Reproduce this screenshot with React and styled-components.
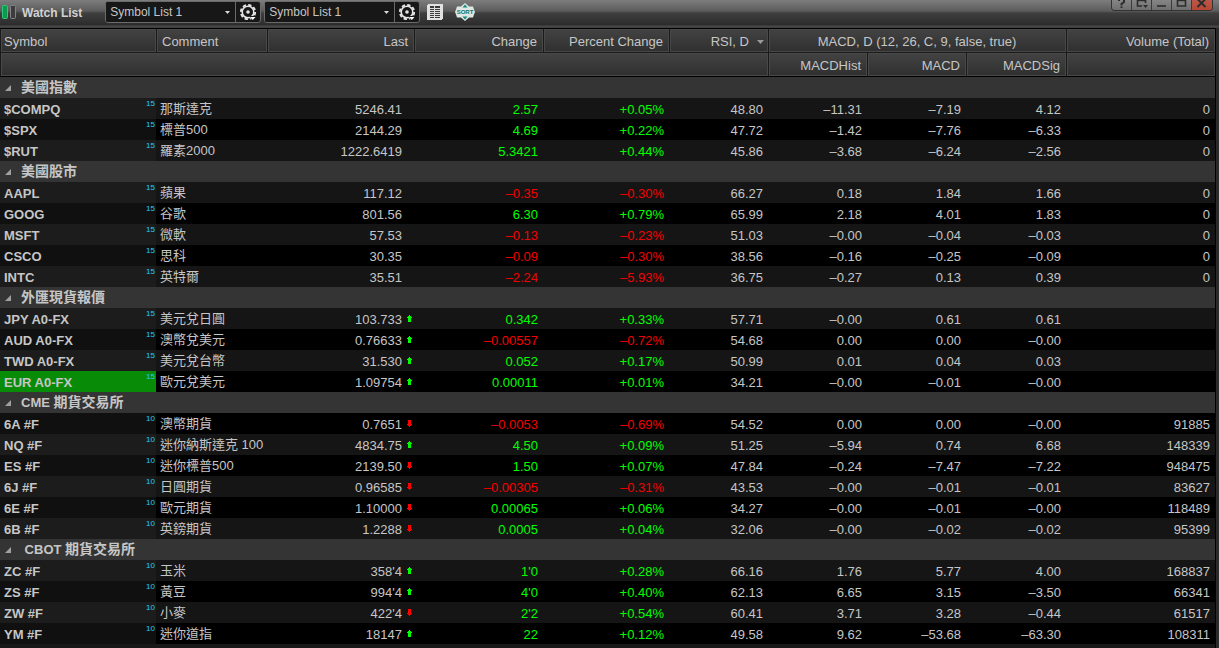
import React from 'react';
import styled, { createGlobalStyle, css } from 'styled-components';

const GlobalStyle = createGlobalStyle`
  * { box-sizing: border-box; }
  body {
    margin: 0;
    background: #2d2d2d;
    color: #c6c6c6;
    font: 13px/20px "Liberation Sans", "Noto Sans CJK TC", sans-serif;
  }
  button, select { font: inherit; color: inherit; }
`;

const Window = styled.div`
  min-height: 100vh;
  display: flex;
  flex-direction: column;
  background: #2b2b2b;
`;

const Toolbar = styled.header`
  height: 28px;
  display: flex;
  align-items: flex-start;
  padding: 0 6px 0 2px;
  background: linear-gradient(#7d7d7d, #5c5c5c 11px, #3f3f3f 13px, #2c2c2c 25px, #4a4a4a 26px, #3c3c3c);
`;

const Title = styled.h1`
  margin: 0 23px 0 6px;
  font-size: 12px;
  line-height: 26px;
  color: #d2d2d2;
`;

const LinkMark = styled.svg`
  margin-top: 5px;
  flex: none;
`;

const ListPicker = styled.div`
  display: flex;
  height: 22px;
  margin: 1px 3px 0 0;
  border: 1px solid #6a6a6a;
  border-radius: 3px;
  background: #171717;
  overflow: hidden;
`;

const SelectWrap = styled.label`
  position: relative;
  display: block;
`;

const Select = styled.select`
  appearance: none;
  display: block;
  width: ${(p) => p.$width}px;
  height: 20px;
  padding: 0 18px 0 4px;
  border: 0;
  border-right: 1px solid #6a6a6a;
  background: #171717;
  font-size: 12px;
  line-height: 20px;
`;

const SelectArrow = styled.svg`
  position: absolute;
  right: 6px;
  top: 9px;
  pointer-events: none;
`;

const IconButton = styled.button`
  display: flex;
  align-items: center;
  justify-content: center;
  width: 24px;
  height: 20px;
  padding: 0;
  border: 0;
  background: none;
`;

const Tools = styled.div`
  display: flex;
  gap: 6px;
  padding-top: 2px;
`;

const WindowControls = styled.div`
  display: flex;
  margin-left: auto;
  height: 11px;
  border: 1px solid #333;
  border-top: 0;
  border-radius: 0 0 4px 4px;
  overflow: hidden;
`;

const WindowButton = styled.button`
  display: flex;
  width: 20px;
  height: 11px;
  padding: 0 0 0 4px;
  border: 0;
  border-right: 1px solid #3a3a3a;
  background: ${(p) => (p.$danger ? 'linear-gradient(#b9584a, #b8452f)' : 'linear-gradient(#858585, #6d6d6d)')};
  &:last-child { border-right: 0; }
`;

const Panel = styled.main`
  flex: 1;
  margin-right: 3px;
  border-right: 1px solid #000;
  border-top: 1px solid #000;
  background: #181818;
`;

const Table = styled.table`
  width: 100%;
  table-layout: fixed;
  border-collapse: separate;
  border-spacing: 0;
`;

const Col = styled.col`
  width: ${(p) => (p.$width ? `${p.$width}px` : 'auto')};
`;

const HeadCell = styled.th`
  height: 24px;
  padding: 2px 6px 0 5px;
  border-left: 1px solid #1a1a1a;
  border-bottom: 1px solid ${(p) => (p.$last ? '#000' : '#1a1a1a')};
  background: linear-gradient(#434343, #2f2f2f);
  box-shadow: inset 0 0 0 1px #484848;
  font-weight: 400;
  line-height: 21px;
  text-align: ${(p) => p.$align || 'right'};
  white-space: nowrap;
  &:first-child { padding-left: 3px; }
`;

const SortButton = styled.button`
  display: inline-flex;
  align-items: center;
  gap: 8px;
  height: 21px;
  padding: 0;
  border: 0;
  background: none;
  vertical-align: top;
`;

const SortedHeadCell = styled(HeadCell)`
  padding-right: 4px;
`;

const GroupCell = styled.th`
  height: 21px;
  padding: 0;
  background: #343434;
  text-align: left;
`;

const GroupToggle = styled.button`
  display: flex;
  align-items: center;
  height: 21px;
  padding: 0 0 0 5px;
  border: 0;
  background: none;
  font-size: 14px;
  font-weight: 700;
  line-height: 21px;
  white-space: pre;
  svg { margin: 1px 10px 0 0; }
`;

const Market = styled.span`
  font-size: 13px;
`;

const toneColors = { up: '#00ff00', down: '#f40000' };

const Cell = styled.td`
  height: 21px;
  padding: 2px 5px 0 0;
  color: ${(p) => toneColors[p.$tone] || 'inherit'};
  line-height: 19px;
  text-align: right;
  white-space: nowrap;
`;

const CommentCell = styled(Cell)`
  padding: 0 0 0 4px;
  line-height: 21px;
  text-align: left;
`;

const SymbolCell = styled.th`
  height: 21px;
  padding: 0;
  background: ${(p) => (p.$selected ? '#088c08' : p.$light ? '#1c1c1c' : '#101010')};
  text-align: left;
`;

const SymbolLine = styled.div`
  display: flex;
  justify-content: space-between;
  height: 21px;
  padding: 0 1px 0 4px;
  line-height: 23px;
`;

const Delay = styled.span`
  font-size: 8px;
  font-weight: 400;
  line-height: 11px;
  color: #22ccff;
`;

const Row = styled.tr`
  ${(p) => css`background: ${p.$light ? '#151515' : '#000'};`}
`;

const LastPrice = styled.div`
  display: flex;
  justify-content: flex-end;
  align-items: center;
  height: 19px;
`;

const TickSlot = styled.span`
  display: flex;
  width: 7px;
  padding-left: 1px;
  margin: 0 -4px 3px 4px;
`;

const Gear = () => (
  <svg width="20" height="20" viewBox="0 0 20 20" aria-hidden="true">
    <circle cx="10" cy="10" r="7.2" fill="none" stroke="#e6e6e6" strokeWidth="1.8" strokeDasharray="3.4 2.25" />
    <circle cx="10" cy="10" r="5.8" fill="none" stroke="#e6e6e6" strokeWidth="1.6" />
    <circle cx="10" cy="10" r="1.8" fill="#e6e6e6" />
    <path d="M11 14h8l-4 5z" fill="#171717" />
    <path d="M12 15h5.5L14.8 18z" fill="#fff" />
  </svg>
);

const SheetIcon = () => (
  <svg width="16" height="16" viewBox="0 0 16 16" shapeRendering="crispEdges" aria-hidden="true">
    <rect width="16" height="16" rx="2" fill="#e2e2e2" />
    <rect x="3" y="2" width="10" height="12" fill="#3a3a3a" />
    {[4, 6, 8, 10, 12].map((y) => <rect key={y} x="3" y={y} width="10" height="1" fill="#dcdcdc" />)}
    <rect x="7" y="2" width="1" height="12" fill="#dcdcdc" />
  </svg>
);

const SortIcon = () => (
  <svg width="20" height="18" viewBox="0 0 20 18" aria-hidden="true">
    <path d="M10 0L14 3.5h4l1 3 1 2.5-1 2.5-1 3h-4L10 18 6 14.5H2l-1-3L0 9l1-2.5 1-3h4z" fill="#dfe6e4" />
    <path d="M7.5 4.5h5L10 1.5zM7.5 13.5h5L10 16.5z" fill="#128a78" />
    <text x="10" y="11" textAnchor="middle" fontFamily="Liberation Sans, sans-serif" fontSize="6" fontWeight="700" fill="#0c7565">SORT</text>
  </svg>
);

const Tick = ({ dir }) => (
  <svg width="5" height="7" viewBox="0 0 5 7" shapeRendering="crispEdges" role="img" aria-label={dir}>
    {dir === 'up'
      ? <path d="M2 0h1v1h1v1h1v1H4v4H1V3H0V2h1V1h1z" fill="#00ff00" />
      : <path d="M1 0h3v4h1v1H4v1H3v1H2V6H1V5H0V4h1z" fill="#ff0000" />}
  </svg>
);

const windowGlyphs = [
  ['Help', 'M3 0V1M8 0V2L5.5 4V5.5M5.5 6.5v1.5'],
  ['Dock', 'M1.5 0v6H6M1.5 0.5h8V3'],
  ['Minimize', 'M1 6h9'],
  ['Maximize', 'M1.5 0v6h8V0M1.5 0.5h8'],
  ['Close', 'M1.5 -1l8 8M9.5 -1l-8 8'],
];

const columnWidths = [156, 111, 147, 129, 126, 99, 99, 99, 100, null];

/* symbol, comment, last, tick, change, percent, rsi, hist, macd, signal, volume */
const groups = [
  { name: '美國指數', delay: 15, rows: [
    ['$COMPQ', '那斯達克', '5246.41', '', '2.57', '+0.05%', '48.80', '–11.31', '–7.19', '4.12', '0'],
    ['$SPX', '標普500', '2144.29', '', '4.69', '+0.22%', '47.72', '–1.42', '–7.76', '–6.33', '0'],
    ['$RUT', '羅素2000', '1222.6419', '', '5.3421', '+0.44%', '45.86', '–3.68', '–6.24', '–2.56', '0'],
  ] },
  { name: '美國股市', delay: 15, rows: [
    ['AAPL', '蘋果', '117.12', '', '–0.35', '–0.30%', '66.27', '0.18', '1.84', '1.66', '0'],
    ['GOOG', '谷歌', '801.56', '', '6.30', '+0.79%', '65.99', '2.18', '4.01', '1.83', '0'],
    ['MSFT', '微軟', '57.53', '', '–0.13', '–0.23%', '51.03', '–0.00', '–0.04', '–0.03', '0'],
    ['CSCO', '思科', '30.35', '', '–0.09', '–0.30%', '38.56', '–0.16', '–0.25', '–0.09', '0'],
    ['INTC', '英特爾', '35.51', '', '–2.24', '–5.93%', '36.75', '–0.27', '0.13', '0.39', '0'],
  ] },
  { name: '外匯現貨報價', delay: 15, rows: [
    ['JPY A0-FX', '美元兌日圓', '103.733', 'up', '0.342', '+0.33%', '57.71', '–0.00', '0.61', '0.61', ''],
    ['AUD A0-FX', '澳幣兌美元', '0.76633', 'up', '–0.00557', '–0.72%', '54.68', '0.00', '0.00', '–0.00', ''],
    ['TWD A0-FX', '美元兌台幣', '31.530', 'up', '0.052', '+0.17%', '50.99', '0.01', '0.04', '0.03', ''],
    ['EUR A0-FX', '歐元兌美元', '1.09754', 'up', '0.00011', '+0.01%', '34.21', '–0.00', '–0.01', '–0.00', ''],
  ] },
  { market: 'CME ', name: '期貨交易所', delay: 10, rows: [
    ['6A #F', '澳幣期貨', '0.7651', 'down', '–0.0053', '–0.69%', '54.52', '0.00', '0.00', '–0.00', '91885'],
    ['NQ #F', '迷你納斯達克 100', '4834.75', 'up', '4.50', '+0.09%', '51.25', '–5.94', '0.74', '6.68', '148339'],
    ['ES #F', '迷你標普500', '2139.50', 'down', '1.50', '+0.07%', '47.84', '–0.24', '–7.47', '–7.22', '948475'],
    ['6J #F', '日圓期貨', '0.96585', 'down', '–0.00305', '–0.31%', '43.53', '–0.00', '–0.01', '–0.01', '83627'],
    ['6E #F', '歐元期貨', '1.10000', 'down', '0.00065', '+0.06%', '34.27', '–0.00', '–0.01', '–0.00', '118489'],
    ['6B #F', '英鎊期貨', '1.2288', 'down', '0.0005', '+0.04%', '32.06', '–0.00', '–0.02', '–0.02', '95399'],
  ] },
  { market: ' CBOT ', name: '期貨交易所', delay: 10, rows: [
    ['ZC #F', '玉米', "358'4", 'up', "1'0", '+0.28%', '66.16', '1.76', '5.77', '4.00', '168837'],
    ['ZS #F', '黃豆', "994'4", 'up', "4'0", '+0.40%', '62.13', '6.65', '3.15', '–3.50', '66341'],
    ['ZW #F', '小麥', "422'4", 'down', "2'2", '+0.54%', '60.41', '3.71', '3.28', '–0.44', '61517'],
    ['YM #F', '迷你道指', '18147', 'up', '22', '+0.12%', '49.58', '9.62', '–53.68', '–63.30', '108311'],
  ] },
];

/* Striping runs through the whole list, counting the group rows too. */
let line = 0;
const sections = groups.map((g) => {
  line += 1;
  const rows = g.rows.map((values) => {
    const light = line % 2 === 1;
    line += 1;
    return { values, light };
  });
  return { ...g, rows };
});

const Picker = ({ label, width }) => (
  <ListPicker>
    <SelectWrap>
      <Select $width={width} aria-label={label} defaultValue="1">
        <option value="1">Symbol List 1</option>
      </Select>
      <SelectArrow width="5" height="3" viewBox="0 0 5 3"><path d="M0 0h5L2.5 3z" fill="#ddd" /></SelectArrow>
    </SelectWrap>
    <IconButton aria-label={`${label} settings`}><Gear /></IconButton>
  </ListPicker>
);

const QuoteRow = ({ row, delay }) => {
  const [symbol, comment, last, tick, change, percent, ...rest] = row.values;
  const tone = change.startsWith('–') ? 'down' : 'up';
  return (
    <Row $light={row.light}>
      <SymbolCell scope="row" $light={row.light} $selected={symbol === 'EUR A0-FX'}>
        <SymbolLine>{symbol}<Delay>{delay}</Delay></SymbolLine>
      </SymbolCell>
      <CommentCell>{comment}</CommentCell>
      <Cell><LastPrice>{last}<TickSlot>{tick && <Tick dir={tick} />}</TickSlot></LastPrice></Cell>
      <Cell $tone={tone}>{change}</Cell>
      <Cell $tone={tone}>{percent}</Cell>
      {rest.map((v, i) => <Cell key={i}>{v}</Cell>)}
    </Row>
  );
};

export default function App() {
  return (
    <Window>
      <GlobalStyle />
      <Toolbar>
        <LinkMark width="14" height="15" viewBox="0 0 14 15" aria-hidden="true">
          <rect x="0.5" y="0.5" width="5" height="13" rx="1" fill="#0c9a4c" stroke="#2fc878" />
          <rect x="8.5" y="0.5" width="5" height="13" rx="1" fill="#3c3c3c" stroke="#858585" />
        </LinkMark>
        <Title>Watch List</Title>
        <Picker label="First list" width={130} />
        <Picker label="Second list" width={130} />
        <Tools>
          <IconButton aria-label="Columns"><SheetIcon /></IconButton>
          <IconButton aria-label="Sort"><SortIcon /></IconButton>
        </Tools>
        <WindowControls>
          {windowGlyphs.map(([name, d]) => (
            <WindowButton key={name} aria-label={name} $danger={name === 'Close'}>
              <svg width="12" height="10" viewBox="0 0 12 10">
                <path d={d} fill="none" stroke="#2c2c2c" strokeWidth={name === 'Close' || name === 'Help' ? 2 : 1.6} />
                {name === 'Dock' && <path d="M7 5h5L9.5 8z" fill="#2c2c2c" />}
              </svg>
            </WindowButton>
          ))}
        </WindowControls>
      </Toolbar>
      <Panel>
        <Table>
          <colgroup>{columnWidths.map((w, i) => <Col key={i} $width={w} />)}</colgroup>
          <thead>
            <tr>
              <HeadCell $align="left">Symbol</HeadCell>
              <HeadCell $align="left">Comment</HeadCell>
              <HeadCell>Last</HeadCell>
              <HeadCell>Change</HeadCell>
              <HeadCell>Percent Change</HeadCell>
              <SortedHeadCell aria-sort="descending">
                <SortButton>
                  RSI, D
                  <svg width="7" height="4" viewBox="0 0 7 4" aria-hidden="true"><path d="M0 0h7L3.5 4z" fill="#999" /></svg>
                </SortButton>
              </SortedHeadCell>
              <HeadCell colSpan={3} $align="center">MACD, D (12, 26, C, 9, false, true)</HeadCell>
              <HeadCell>Volume (Total)</HeadCell>
            </tr>
            <tr>
              <HeadCell colSpan={6} $last />
              <HeadCell $last>MACDHist</HeadCell>
              <HeadCell $last>MACD</HeadCell>
              <HeadCell $last>MACDSig</HeadCell>
              <HeadCell $last />
            </tr>
          </thead>
          {sections.map((g, i) => (
            <tbody key={i}>
              <tr>
                <GroupCell colSpan={10} scope="rowgroup">
                  <GroupToggle aria-expanded="true">
                    <svg width="6" height="6" viewBox="0 0 6 6" aria-hidden="true"><path d="M6 0v6H0z" fill="#a0a0a0" /></svg>
                    {g.market && <Market>{g.market}</Market>}{g.name}
                  </GroupToggle>
                </GroupCell>
              </tr>
              {g.rows.map((r) => <QuoteRow key={r.values[0]} row={r} delay={g.delay} />)}
            </tbody>
          ))}
        </Table>
      </Panel>
    </Window>
  );
}
